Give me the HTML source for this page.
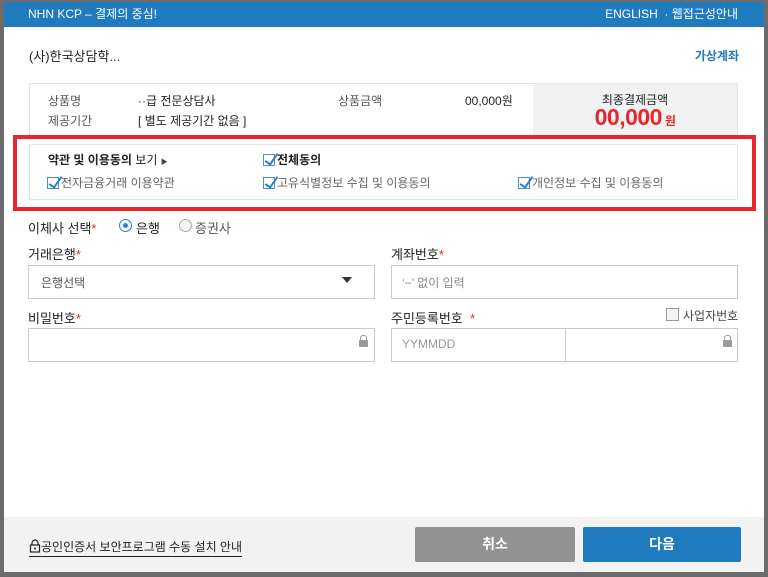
<!DOCTYPE html>
<html><head><meta charset="utf-8"><style>
*{box-sizing:border-box;margin:0;padding:0}
body{width:768px;height:577px;background:#6b6b6b;font-family:"Liberation Sans","Noto Sans CJK KR",sans-serif;position:relative;overflow:hidden;color:#222}
.win{position:absolute;left:4px;top:2px;width:760px;height:570px;background:#fff}
.hd{position:absolute;left:0;top:0;width:760px;height:25px;background:#1f7bbd;color:#fff;font-size:12px;line-height:25px}
.a{position:absolute;white-space:nowrap}
.box{position:absolute;border:1px solid #ccc;background:#fff}
.cb{display:inline-block;width:12px;height:12px;border:1px solid #4a90d0;position:relative;vertical-align:-2px;margin-right:2px}
.cb:after{content:"";position:absolute;left:4px;top:-4px;width:5px;height:12px;border-right:2px solid #2a7fd0;border-bottom:2px solid #2a7fd0;transform:rotate(35deg)}
.red{color:#e8262d}
.lock{position:absolute;width:9px;height:7px;background:#999;border-radius:1px}
.lock:before{content:"";position:absolute;left:1px;top:-5px;width:5px;height:6px;border:1.5px solid #999;border-bottom:none;border-radius:3px 3px 0 0}
</style></head><body>
<div class="win">
<div class="hd"><span class="a" style="left:24px">NHN KCP – 결제의 중심!</span><span class="a" style="right:26px">ENGLISH &nbsp;· 웹접근성안내</span></div>
<div class="a" style="left:25px;top:44px;font-size:13px">(사)한국상담학...</div>
<div class="a" style="right:25px;top:45px;font-size:12px;color:#1f7bbd;font-weight:bold">가상계좌</div>
<div class="a" style="left:25px;top:81px;width:709px;height:56px;border:1px solid #e5e5e5;background:#fff"></div>
<div class="a" style="left:529px;top:82px;width:204px;height:55px;background:#f2f2f2"></div>
<div class="a" style="left:44px;top:90px;font-size:12px;color:#555">상품명</div>
<div class="a" style="left:44px;top:110px;font-size:12px;color:#555">제공기간</div>
<div class="a" style="left:134px;top:90px;font-size:12px">··급 전문상담사</div>
<div class="a" style="left:134px;top:110px;font-size:12px">[ 별도 제공기간 없음 ]</div>
<div class="a" style="left:334px;top:90px;font-size:12px;color:#555">상품금액</div>
<div class="a" style="left:461px;top:90px;font-size:12px">00,000원</div>
<div class="a" style="left:529px;width:204px;text-align:center;top:89px;font-size:12px">최종결제금액</div>
<div class="a" style="left:529px;width:204px;text-align:center;top:102px;font-size:23px;font-weight:bold;color:#e8262d;letter-spacing:-0.5px">00,000<span style="font-size:12px"> 원</span></div>
<div class="a" style="left:9px;top:133px;width:743px;height:76px;border:4px solid #e8262d"></div>
<div class="a" style="left:25px;top:142px;width:709px;height:56px;border:1px solid #e5e5e5"></div>
<div class="a" style="left:44px;top:149px;font-size:12px"><b>약관 및 이용동의</b> 보기 <span style="font-size:7px;color:#444">▶</span></div>
<div class="a" style="left:259px;top:149px;font-size:12px;font-weight:bold"><span class="cb"></span>전체동의</div>
<div class="a" style="left:43px;top:172px;font-size:12px;color:#666"><span class="cb"></span>전자금융거래 이용약관</div>
<div class="a" style="left:259px;top:172px;font-size:12px;color:#666"><span class="cb"></span>고유식별정보 수집 및 이용동의</div>
<div class="a" style="left:514px;top:172px;font-size:12px;color:#666"><span class="cb"></span>개인정보 수집 및 이용동의</div>
<div class="a" style="left:24px;top:216px;font-size:13px">이체사 선택<span class="red">*</span></div>
<div class="a" style="left:115px;top:217px;width:13px;height:13px;border:1px solid #2a7fd0;border-radius:50%"><div style="margin:3px;width:5px;height:5px;border-radius:50%;background:#2a7fd0"></div></div>
<div class="a" style="left:132px;top:216px;font-size:13px">은행</div>
<div class="a" style="left:175px;top:217px;width:13px;height:13px;border:1px solid #aaa;border-radius:50%;background:#f4f4f4"></div>
<div class="a" style="left:191px;top:216px;font-size:13px;color:#555">증권사</div>
<div class="a" style="left:24px;top:242px;font-size:13px">거래은행<span class="red">*</span></div>
<div class="a" style="left:387px;top:242px;font-size:13px">계좌번호<span class="red">*</span></div>
<div class="box" style="left:24px;top:263px;width:347px;height:34px"></div>
<div class="a" style="left:37px;top:272px;font-size:12px;color:#555">은행선택</div>
<div class="a" style="left:338px;top:275px;width:0;height:0;border-left:5px solid transparent;border-right:5px solid transparent;border-top:6px solid #333"></div>
<div class="box" style="left:387px;top:263px;width:347px;height:34px"></div>
<div class="a" style="left:398px;top:272px;font-size:12px;color:#888">‘−’ 없이 입력</div>
<div class="a" style="left:24px;top:306px;font-size:13px">비밀번호<span class="red">*</span></div>
<div class="a" style="left:387px;top:306px;font-size:13px">주민등록번호 <span class="red">&nbsp;*</span></div>
<div class="a" style="left:662px;top:306px;width:13px;height:13px;border:1px solid #999;background:#f4f4f4"></div>
<div class="a" style="left:679px;top:305px;font-size:12px;color:#444">사업자번호</div>
<div class="box" style="left:24px;top:326px;width:347px;height:34px"></div>
<div class="lock" style="left:355px;top:338px"></div>
<div class="box" style="left:387px;top:326px;width:347px;height:34px"></div>
<div class="a" style="left:561px;top:326px;width:1px;height:34px;background:#ccc"></div>
<div class="a" style="left:398px;top:335px;font-size:12px;color:#999">YYMMDD</div>
<div class="lock" style="left:719px;top:338px"></div>
<div class="a" style="left:0;top:515px;width:760px;height:55px;background:#f2f2f2"></div>
<div class="a" style="left:25px;top:536px;font-size:12px;border-bottom:1px solid #222;padding-bottom:1px"><svg width="12" height="14" viewBox="0 0 12 14" style="vertical-align:-2px"><path d="M3 6V4a3 3 0 0 1 6 0v2" fill="none" stroke="#222" stroke-width="1.2"/><rect x="1.5" y="6" width="9" height="7" fill="none" stroke="#222" stroke-width="1.2"/><circle cx="6" cy="9.5" r="1" fill="#222"/></svg>공인인증서 보안프로그램 수동 설치 안내</div>
<div class="a" style="left:411px;top:525px;width:160px;height:35px;background:#929292;border-radius:2px;color:#fff;font-size:14px;font-weight:bold;text-align:center;line-height:35px">취소</div>
<div class="a" style="left:579px;top:525px;width:158px;height:35px;background:#1f7bbd;border-radius:2px;color:#fff;font-size:14px;font-weight:bold;text-align:center;line-height:35px">다음</div>
</div>
</body></html>
